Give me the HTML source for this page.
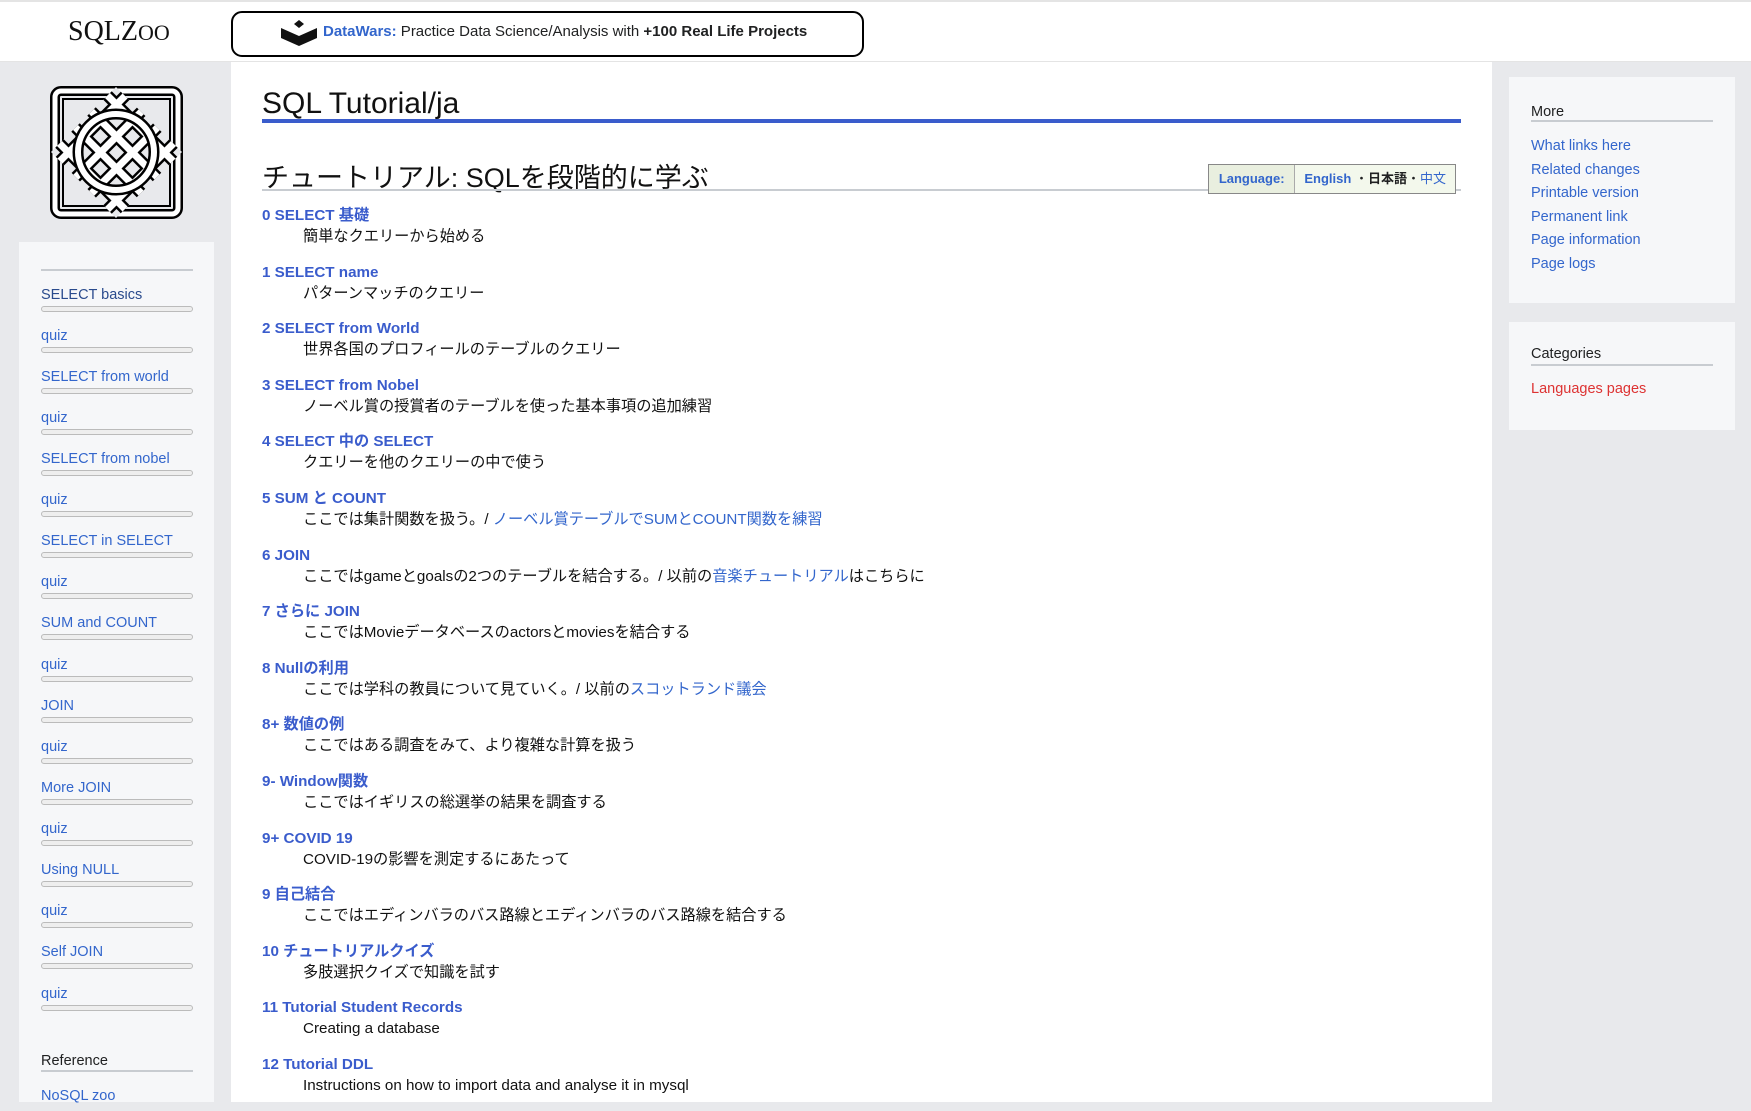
<!DOCTYPE html>
<html><head><meta charset="utf-8"><style>
*{margin:0;padding:0;box-sizing:border-box}
body{width:1751px;height:1102px;overflow:hidden;background:#e8e9ec;font-family:"Liberation Sans","Noto Sans CJK JP",sans-serif;position:relative;color:#202122}
a{color:#3366cc;text-decoration:none}
#hdr{position:absolute;left:0;top:0;width:1751px;height:62px;background:#fff;border-top:2px solid #e4e4e4;border-bottom:1px solid #e4e4e4}
#logo{position:absolute;left:68px;top:14px;font-family:"Liberation Serif",serif;font-size:28px;color:#111}
#logo small{font-size:22px}
#dw{position:absolute;left:231px;top:9px;width:633px;height:46px;border:2.5px solid #000;border-radius:11px;font-size:15px;line-height:38px;padding-left:90px}
#dw b.c{color:#3366cc}
#main{position:absolute;left:231px;top:62px;width:1261px;height:1040px;background:#fff}
#lp{position:absolute;left:19px;top:242px;width:195px;height:860px;background:#f6f7f9}
.sb{position:absolute;left:41px;font-size:14.5px}
.bar{position:absolute;left:41px;width:152px;height:6px;border:1px solid #bbb;border-radius:4px;background:#eee}
.hl{position:absolute;left:41px;width:152px;height:2px;background:#c8ccd1}
.rbox{position:absolute;left:1509px;width:226px;background:#f6f7f9}
.rbox .h{position:absolute;left:22px;font-size:14.5px;color:#202122}
.rbox .l{position:absolute;left:22px;width:182px;height:2px;background:#c8ccd1}
.rbox a{position:absolute;left:22px;font-size:14.5px}
h1{position:absolute;left:262px;top:87px;font-size:30px;font-weight:normal;color:#111}
#bl{position:absolute;left:262px;top:119px;width:1199px;height:4px;background:#3a5ccc}
h2{position:absolute;left:262px;top:156px;font-size:27px;font-weight:normal;color:#111}
#gl{position:absolute;left:262px;top:189px;width:1199px;height:2px;background:#c8ccd1}
#lang{position:absolute;left:1208px;top:164px;height:30px;width:248px;border:1px solid #888;display:flex;font-size:13px;line-height:28px;white-space:nowrap}
#lang div{padding:0 9px}
#lang .a{background:#e9efdf;border-right:1px solid #aaa;font-weight:bold;color:#3366cc;width:91px;text-align:center}
#lang .b{background:#f3f8ec;flex:1}
#items{position:absolute;left:262px;top:205px}
.it{height:56.6px}
.it .t{font-weight:bold;font-size:15.2px;line-height:21px;color:#3a5ccc;display:block}
.it .d{font-size:15.2px;line-height:21px;padding-left:41px;color:#111}
</style></head><body>
<div id="hdr">
<div id="logo">SQLZ<small>OO</small></div>
<div id="dw"><svg style="position:absolute;left:48px;top:7px" width="36" height="26" viewBox="0 0 36 26"><path d="M18 0 L23 4 L18 8 L13 4Z" fill="#111"/><path d="M0 8 L18 16 L36 8 L36 18 L18 26 L0 18Z" fill="#111"/></svg><b class="c">DataWars:</b> Practice Data Science/Analysis with <b>+100 Real Life Projects</b></div>
</div>
<svg style="position:absolute;left:49px;top:85px" width="135" height="135" viewBox="0 0 135 135">
<defs><clipPath id="dm"><polygon points="67,2 133,67 67,133 2,67"/></clipPath></defs>
<rect x="6" y="6" width="123" height="123" rx="6" fill="none" stroke="#000" stroke-width="10"/>
<rect x="6" y="6" width="123" height="123" rx="6" fill="none" stroke="#fff" stroke-width="5"/>
<rect x="14" y="14" width="107" height="107" fill="none" stroke="#000" stroke-width="2"/>
<g clip-path="url(#dm)">
<rect x="0" y="0" width="135" height="135" fill="#e8e9ec"/>
<g stroke="#000" stroke-width="12"><path d="M-40 40 L95 175 M-24 24 L111 159 M-8 8 L127 143 M8 -8 L143 127 M24 -24 L159 111 M40 -40 L175 95 M56 -56 L191 79 M-56 56 L79 191"/><path d="M-40 95 L95 -40 M-24 111 L111 -24 M-8 127 L127 -8 M8 143 L143 8 M24 159 L159 24 M40 175 L175 40 M56 191 L191 56 M-56 79 L79 -56"/></g>
<g stroke="#fff" stroke-width="7"><path d="M-40 40 L95 175 M-24 24 L111 159 M-8 8 L127 143 M8 -8 L143 127 M24 -24 L159 111 M40 -40 L175 95 M56 -56 L191 79 M-56 56 L79 191"/><path d="M-40 95 L95 -40 M-24 111 L111 -24 M-8 127 L127 -8 M8 143 L143 8 M24 159 L159 24 M40 175 L175 40 M56 191 L191 56 M-56 79 L79 -56"/></g>
<circle cx="67" cy="67" r="38" fill="none" stroke="#000" stroke-width="11"/>
<circle cx="67" cy="67" r="38" fill="none" stroke="#fff" stroke-width="6"/>
</g>
</svg>
<div id="lp"></div>
<div class="hl" style="top:269px"></div>
<a class="sb" style="top:287px;color:#2a4b8d">SELECT basics</a><div class="bar" style="top:306px"></div>
<a class="sb" style="top:328px">quiz</a><div class="bar" style="top:347px"></div>
<a class="sb" style="top:369px">SELECT from world</a><div class="bar" style="top:388px"></div>
<a class="sb" style="top:410px">quiz</a><div class="bar" style="top:429px"></div>
<a class="sb" style="top:451px">SELECT from nobel</a><div class="bar" style="top:470px"></div>
<a class="sb" style="top:492px">quiz</a><div class="bar" style="top:511px"></div>
<a class="sb" style="top:533px">SELECT in SELECT</a><div class="bar" style="top:552px"></div>
<a class="sb" style="top:574px">quiz</a><div class="bar" style="top:593px"></div>
<a class="sb" style="top:615px">SUM and COUNT</a><div class="bar" style="top:634px"></div>
<a class="sb" style="top:657px">quiz</a><div class="bar" style="top:676px"></div>
<a class="sb" style="top:698px">JOIN</a><div class="bar" style="top:717px"></div>
<a class="sb" style="top:739px">quiz</a><div class="bar" style="top:758px"></div>
<a class="sb" style="top:780px">More JOIN</a><div class="bar" style="top:799px"></div>
<a class="sb" style="top:821px">quiz</a><div class="bar" style="top:840px"></div>
<a class="sb" style="top:862px">Using NULL</a><div class="bar" style="top:881px"></div>
<a class="sb" style="top:903px">quiz</a><div class="bar" style="top:922px"></div>
<a class="sb" style="top:944px">Self JOIN</a><div class="bar" style="top:963px"></div>
<a class="sb" style="top:986px">quiz</a><div class="bar" style="top:1005px"></div>
<div class="sb" style="top:1053px;color:#202122">Reference</div><div class="hl" style="top:1070px"></div>
<a class="sb" style="top:1088px">NoSQL zoo</a>
<div id="main"></div>
<div class="rbox" style="top:77px;height:226px">
<div class="h" style="top:27px">More</div><div class="l" style="top:43px"></div>
<a style="top:61px">What links here</a><a style="top:85px">Related changes</a><a style="top:108px">Printable version</a><a style="top:132px">Permanent link</a><a style="top:155px">Page information</a><a style="top:179px">Page logs</a>
</div>
<div class="rbox" style="top:322px;height:108px">
<div class="h" style="top:24px">Categories</div><div class="l" style="top:42px"></div>
<a style="top:59px;color:#d33">Languages pages</a>
</div>
<h1>SQL Tutorial/ja</h1><div id="bl"></div>
<h2>チュートリアル: SQLを段階的に学ぶ</h2><div id="gl"></div>
<div id="lang"><div class="a">Language:</div><div class="b"><b style="color:#3366cc">English</b> ・<b>日本語</b>・<a>中文</a></div></div>
<div id="items">
<div class="it"><a class="t">0 SELECT 基礎</a><div class="d">簡単なクエリーから始める</div></div>
<div class="it"><a class="t">1 SELECT name</a><div class="d">パターンマッチのクエリー</div></div>
<div class="it"><a class="t">2 SELECT from World</a><div class="d">世界各国のプロフィールのテーブルのクエリー</div></div>
<div class="it"><a class="t">3 SELECT from Nobel</a><div class="d">ノーベル賞の授賞者のテーブルを使った基本事項の追加練習</div></div>
<div class="it"><a class="t">4 SELECT 中の SELECT</a><div class="d">クエリーを他のクエリーの中で使う</div></div>
<div class="it"><a class="t">5 SUM と COUNT</a><div class="d">ここでは集計関数を扱う。/ <a>ノーベル賞テーブルでSUMとCOUNT関数を練習</a></div></div>
<div class="it"><a class="t">6 JOIN</a><div class="d">ここではgameとgoalsの2つのテーブルを結合する。/ 以前の<a>音楽チュートリアル</a>はこちらに</div></div>
<div class="it"><a class="t">7 さらに JOIN</a><div class="d">ここではMovieデータベースのactorsとmoviesを結合する</div></div>
<div class="it"><a class="t">8 Nullの利用</a><div class="d">ここでは学科の教員について見ていく。/ 以前の<a>スコットランド議会</a></div></div>
<div class="it"><a class="t">8+ 数値の例</a><div class="d">ここではある調査をみて、より複雑な計算を扱う</div></div>
<div class="it"><a class="t">9- Window関数</a><div class="d">ここではイギリスの総選挙の結果を調査する</div></div>
<div class="it"><a class="t">9+ COVID 19</a><div class="d">COVID-19の影響を測定するにあたって</div></div>
<div class="it"><a class="t">9 自己結合</a><div class="d">ここではエディンバラのバス路線とエディンバラのバス路線を結合する</div></div>
<div class="it"><a class="t">10 チュートリアルクイズ</a><div class="d">多肢選択クイズで知識を試す</div></div>
<div class="it"><a class="t">11 Tutorial Student Records</a><div class="d">Creating a database</div></div>
<div class="it"><a class="t">12 Tutorial DDL</a><div class="d">Instructions on how to import data and analyse it in mysql</div></div>
</div>
</body></html>
